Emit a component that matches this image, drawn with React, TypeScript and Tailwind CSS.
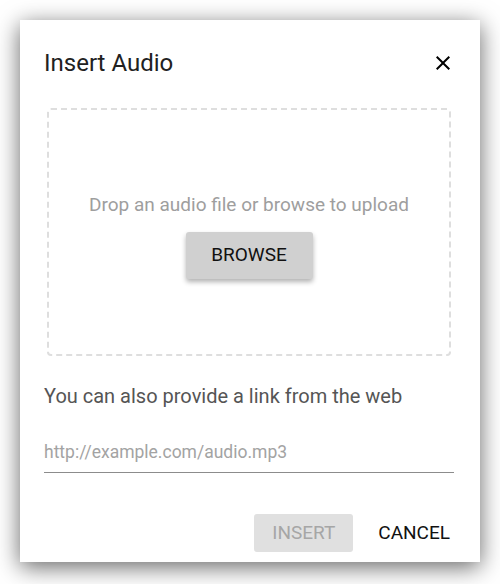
export default function App() {
  return (
    <div className="w-[500px] h-[584px] bg-white p-[20px] font-['Roboto',sans-serif]">
      <div className="w-[460px] h-[542px] bg-white shadow-[0_5px_22px_rgba(0,0,0,0.6)] flex flex-col pl-[24px] pr-[26px] pt-[27px]">
        {/* Header */}
        <div className="flex items-center justify-between h-[32px]">
          <h2 className="text-[24px] leading-[32px] text-[#212121]">Insert Audio</h2>
          <button type="button" className="w-[24px] h-[24px] flex items-center justify-center text-black mr-[-1px]">
            <svg viewBox="0 0 24 24" className="w-[24px] h-[24px]" fill="currentColor">
              <path d="M19 6.41L17.59 5 12 10.59 6.41 5 5 6.41 10.59 12 5 17.59 6.41 19 12 13.41 17.59 19 19 17.59 13.41 12z" />
            </svg>
          </button>
        </div>

        {/* Drop zone */}
        <div className="mt-[29px] mx-[3px] h-[248px] border-2 border-dashed border-[#dedede] rounded-[4px] flex flex-col items-center justify-center pt-[8px]">
          <p className="text-[19px] leading-[24px] text-[#9e9e9e]">Drop an audio file or browse to upload</p>
          <button
            type="button"
            className="mt-[15px] w-[127px] h-[47px] bg-[#d0d0d0] rounded-[3px] text-[19px] text-[#111111] shadow-[0_3px_5px_rgba(0,0,0,0.3)]"
          >
            BROWSE
          </button>
        </div>

        {/* Link */}
        <p className="mt-[28px] text-[20px] leading-[24px] text-[#555555]">You can also provide a link from the web</p>
        <div className="mt-[32px] border-b border-[#8c8c8c] pb-[7px]">
          <input
            type="text"
            placeholder="http://example.com/audio.mp3"
            className="w-full text-[17.5px] leading-[24px] outline-none placeholder:text-[#a3a3a3] bg-transparent"
          />
        </div>

        {/* Actions */}
        <div className="mt-[41px] flex justify-end items-center gap-[13px] mr-[-8px]">
          <button
            type="button"
            disabled
            className="w-[99px] h-[38px] bg-[#e0e0e0] rounded-[3px] text-[19px] text-[#a6a6a6]"
          >
            INSERT
          </button>
          <button type="button" className="h-[38px] px-[12px] text-[19px] text-[#111111]">
            CANCEL
          </button>
        </div>
      </div>
    </div>
  )
}
